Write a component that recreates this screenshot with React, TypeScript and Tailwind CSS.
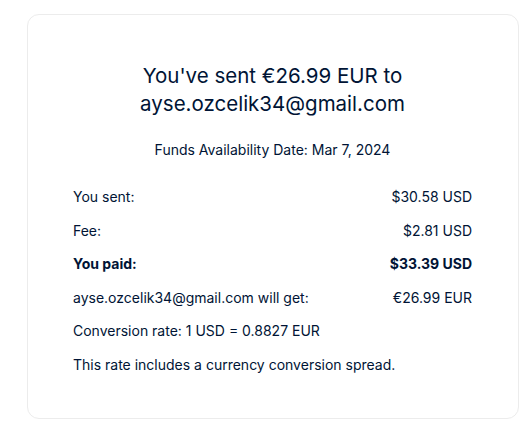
export default function App() {
  const rows = [
    { l: "You sent:", r: "$30.58 USD", b: false },
    { l: "Fee:", r: "$2.81 USD", b: false },
    { l: "You paid:", r: "$33.39 USD", b: true },
    { l: "ayse.ozcelik34@gmail.com will get:", r: "€26.99 EUR", b: false },
  ];
  return (
    <div className="w-[526px] h-[433px] bg-white pt-[14px] pl-[27px]" style={{ fontFamily: "Inter, 'Liberation Sans', sans-serif" }}>
      <div className="w-[492px] h-[405px] rounded-[12px] border border-[#ececec] bg-white text-[#001435] pl-[45px] pr-[46px] pt-[47px]">
        <h1 className="text-center text-[20.5px] leading-[28px] font-normal px-[20px]">
          You've sent €26.99 EUR to ayse.ozcelik34@gmail.com
        </h1>
        <p className="text-center text-[14px] leading-[20px] mt-[22px]">Funds Availability Date: Mar 7, 2024</p>
        <div className="mt-[27px] flex flex-col gap-[13.5px] text-[14px] leading-[20px]">
          {rows.map((r) => (
            <div key={r.l} className={"flex justify-between " + (r.b ? "font-bold" : "")}>
              <span>{r.l}</span>
              <span>{r.r}</span>
            </div>
          ))}
          <div>Conversion rate: 1 USD = 0.8827 EUR</div>
          <div>This rate includes a currency conversion spread.</div>
        </div>
      </div>
    </div>
  );
}
